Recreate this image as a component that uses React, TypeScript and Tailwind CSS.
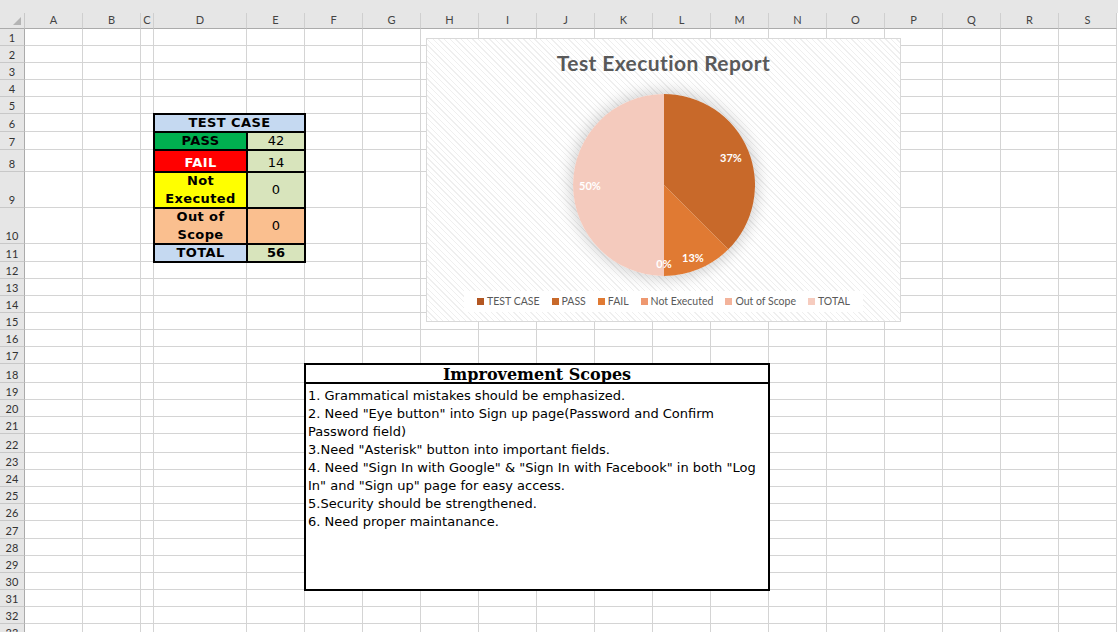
import React from "react";

const COLS = ["A", "B", "C", "D", "E", "F", "G", "H", "I", "J", "K", "L", "M", "N", "O", "P", "Q", "R", "S"];
const ROW_COUNT = 33;

// cells that are owned by the table / merged text box
function isCovered(row: number, col: number) {
  if (row >= 6 && row <= 11 && (col === 3 || col === 4)) return true;
  if (row >= 18 && row <= 30 && col >= 5 && col <= 12) return true;
  return false;
}

const legend = [
  { label: "TEST CASE", swatch: "bg-[#b35722]" },
  { label: "PASS", swatch: "bg-[#c8692a]" },
  { label: "FAIL", swatch: "bg-[#e07a33]" },
  { label: "Not Executed", swatch: "bg-[#ee9870]" },
  { label: "Out of Scope", swatch: "bg-[#f3b39b]" },
  { label: "TOTAL", swatch: "bg-[#f6ccbf]" },
];

const scopes = [
  "1. Grammatical mistakes should be emphasized.",
  '2. Need "Eye button" into Sign up page(Password and Confirm',
  "Password field)",
  '3.Need "Asterisk" button into important fields.',
  '4. Need "Sign In with Google" & "Sign In with Facebook" in both "Log',
  'In" and "Sign up" page for easy access.',
  "5.Security should be strengthened.",
  "6. Need proper maintanance.",
];

function Chart() {
  return (
    <div className="absolute left-[426px] top-[38px] flex h-[284px] w-[475px] flex-col items-center border border-[#d9d9d9] bg-white bg-[image:repeating-linear-gradient(45deg,#ffffff_0px,#ffffff_3px,#efefef_3px,#efefef_4px)]">
      <div className="mt-[11px] font-['Lato',sans-serif] text-[21px] font-bold leading-[26px] tracking-[0.4px] text-[#595959]">
        Test Execution Report
      </div>

      {/* Pie */}
      <div className="mt-[18px] h-[182px] w-[182px] rounded-full shadow-[0_0_16px_2px_rgba(0,0,0,0.2)]">
        <svg width="182" height="182" viewBox="-91 -91 182 182">
          <path d="M0 0 L0 -91 A91 91 0 0 1 64.35 64.35 Z" fill="#c8692a" />
          <path d="M0 0 L64.35 64.35 A91 91 0 0 1 0 91 Z" fill="#e07a33" />
          <path d="M0 0 L0 91 A91 91 0 0 1 0 -91 Z" fill="#f4cabd" />
          <g fill="#ffffff" fontFamily="Lato, sans-serif" fontWeight="700" fontSize="11" textAnchor="middle" dominantBaseline="central">
            <text x="67" y="-28">37%</text>
            <text x="29" y="72">13%</text>
            <text x="0" y="78">0%</text>
            <text x="-74" y="0">50%</text>
          </g>
        </svg>
      </div>

      {/* Legend */}
      <div className="mt-[15px] flex h-[21px] items-center gap-[12px] bg-white px-[13px] font-['Lato',sans-serif] text-[10.5px] text-[#595959]">
        {legend.map((l) => (
          <div key={l.label} className="flex items-center gap-[3px]">
            <span className={`h-[7px] w-[7px] ${l.swatch}`} />
            <span>{l.label}</span>
          </div>
        ))}
      </div>
    </div>
  );
}

export default function App() {
  const cells: React.ReactNode[] = [];

  // header row
  cells.push(
    <div key="corner" className="relative border-b border-r border-b-[#ababab] border-r-[#c8c8c8] bg-[#e6e6e6]">
      <svg className="absolute bottom-[3px] right-[3px]" width="8" height="8" viewBox="0 0 8 8">
        <polygon points="8,0 8,8 0,8" fill="#b4b4b4" />
      </svg>
    </div>
  );
  COLS.forEach((c) => {
    cells.push(
      <div
        key={`h-${c}`}
        className="flex items-center justify-center border-b border-r border-b-[#ababab] border-r-[#cfcfcf] bg-[#e6e6e6] font-['Lato',sans-serif] text-[11px] text-[#444]"
      >
        {c}
      </div>
    );
  });

  for (let r = 1; r <= ROW_COUNT; r++) {
    cells.push(
      <div
        key={`r-${r}`}
        className="flex items-end justify-center border-b border-r border-b-[#c8c8c8] border-r-[#ababab] bg-[#e6e6e6] font-['Lato',sans-serif] text-[11px] leading-[15px] text-[#333]"
      >
        {r}
      </div>
    );
    COLS.forEach((c, i) => {
      if (isCovered(r, i)) return;
      cells.push(<div key={`${c}${r}`} className="border-b border-r border-[#d4d4d4]" />);
    });
  }

  return (
    <div className="relative h-[632px] w-[1118px] overflow-hidden bg-white font-['DejaVu_Sans',sans-serif] text-black">
      <div className="h-[13px] bg-[#e6e6e6]" />
      <div className="grid grid-cols-[25px_58px_58px_13px_93px_58px_58px_58px_58px_58px_58px_58px_58px_58px_58px_58px_58px_58px_58px_58px] grid-rows-[16px_17px_17px_17px_17px_17px_18px_18px_22px_36px_36px_18px_17px_17px_17px_17px_17px_17px_19px_17px_17px_17px_19px_17px_17px_17px_17px_18px_17px_17px_17px_17px_17px_17px]">
        {cells}

        {/* Test case summary, D6:E11 */}
        <div className="col-span-2 col-start-5 row-start-7 -m-px flex items-end justify-center border-2 border-black bg-[#c5d9f1] text-[13px] font-bold leading-[16px] tracking-[0.4px]">
          TEST CASE
        </div>
        <div className="col-start-5 row-start-8 -m-px flex items-end justify-center border-2 border-black bg-[#00b050] text-[13px] font-bold leading-[16px] tracking-[0.4px]">
          PASS
        </div>
        <div className="col-start-6 row-start-8 -m-px flex items-end justify-center border-2 border-black bg-[#d8e4bc] text-[13px] leading-[16px]">
          42
        </div>
        <div className="col-start-5 row-start-9 -m-px flex items-end justify-center border-2 border-black bg-[#ff0000] text-[13px] font-bold leading-[16px] tracking-[0.4px] text-white">
          FAIL
        </div>
        <div className="col-start-6 row-start-9 -m-px flex items-end justify-center border-2 border-black bg-[#d8e4bc] text-[13px] leading-[16px]">
          14
        </div>
        <div className="col-start-5 row-start-10 -m-px flex flex-col items-center justify-center border-2 border-black bg-[#ffff00] text-[13px] font-bold leading-[18px] tracking-[0.4px]">
          <span>Not</span>
          <span>Executed</span>
        </div>
        <div className="col-start-6 row-start-10 -m-px flex items-center justify-center border-2 border-black bg-[#d8e4bc] text-[13px] leading-[16px]">
          0
        </div>
        <div className="col-start-5 row-start-11 -m-px flex flex-col items-center justify-center border-2 border-black bg-[#fabf8f] text-[13px] font-bold leading-[18px] tracking-[0.4px]">
          <span>Out of</span>
          <span>Scope</span>
        </div>
        <div className="col-start-6 row-start-11 -m-px flex items-center justify-center border-2 border-black bg-[#fabf8f] text-[13px] leading-[16px]">
          0
        </div>
        <div className="col-start-5 row-start-12 -m-px flex items-end justify-center border-2 border-black bg-[#c5d9f1] text-[13px] font-bold leading-[16px] tracking-[0.4px]">
          TOTAL
        </div>
        <div className="col-start-6 row-start-12 -m-px flex items-end justify-center border-2 border-black bg-[#d8e4bc] text-[13px] font-bold leading-[16px]">
          56
        </div>

        {/* Improvement Scopes, F18:M30 */}
        <div className="col-span-8 col-start-7 row-start-19 -m-px flex items-center justify-center border-2 border-black bg-white pt-[3px] font-['DejaVu_Serif',serif] text-[16px] font-bold leading-[18px]">
          Improvement Scopes
        </div>
        <div className="col-span-8 col-start-7 row-span-12 row-start-20 -m-px border-2 border-black bg-white pl-[2px] pt-[3px] text-[13px] leading-[18px]">
          {scopes.map((s) => (
            <div key={s} className="whitespace-nowrap">
              {s}
            </div>
          ))}
        </div>
      </div>

      <Chart />
    </div>
  );
}
